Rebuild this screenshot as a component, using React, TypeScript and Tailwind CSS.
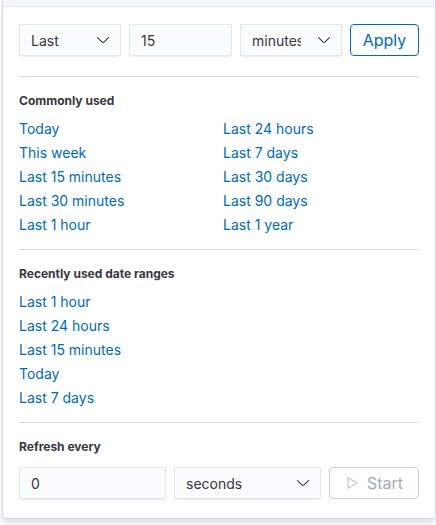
import React from "react";

const Chevron = () => (
  <svg width="16" height="16" viewBox="0 0 16 16" className="absolute right-[10px] top-1/2 -translate-y-1/2" fill="#343741">
    <path d="M13.069 5.157L8.384 9.768a.546.546 0 01-.768 0L2.93 5.158a.552.552 0 00-.771 0 .53.53 0 000 .759l4.684 4.61c.641.631 1.672.63 2.312 0l4.684-4.61a.53.53 0 000-.76.552.552 0 00-.771 0z" />
  </svg>
);

const field =
  "relative h-8 bg-[#fbfcfd] shadow-[inset_0_0_0_1px_rgba(15,39,118,0.1),0_1px_1px_-1px_rgba(152,162,179,0.2),0_3px_2px_-2px_rgba(152,162,179,0.2)] text-[14px] text-[#343741] flex items-center pl-3 overflow-hidden whitespace-nowrap";

const Select = ({ label, className = "" }: { label: string; className?: string }) => (
  <div className={`${field} pr-[41px] ${className}`}>
    <span className="overflow-hidden block min-w-0">{label}</span>
    <Chevron />
  </div>
);

const Link = ({ children }: { children: React.ReactNode }) => (
  <div className="h-6 flex items-center text-[14px] text-[#006bb4] leading-none">{children}</div>
);

export default function App() {
  return (
    <div className="w-[436px] h-[525px] bg-white relative overflow-hidden" style={{ fontFamily: "Inter, 'Noto Sans', sans-serif" }}>
      <div className="absolute left-[2px] top-0 w-[434px] h-[519px] bg-white border-x border-b border-[#d3dae6] rounded-b-[4px] shadow-[0_6px_12px_-1px_rgba(152,162,179,0.2),0_4px_4px_-1px_rgba(152,162,179,0.2)] flex flex-col">
        <div className="h-[7px] bg-[#f5f7fa] border-b border-[#e4e8ef] shrink-0" />
        <div className="px-4 pt-[17px]">
          <div className="flex gap-2 items-center">
            <Select label="Last" className="w-[102px]" />
            <div className={`${field} w-[103px]`}>15</div>
            <Select label="minutes" className="w-[102px]" />
            <div className="w-[69px] h-8 border border-[#006bb4] rounded-[4px] flex items-center justify-center text-[16px] text-[#006bb4]">Apply</div>
          </div>
          <div className="h-px bg-[#d3dae6] mt-5" />
          <div className="pt-4 pb-3">
            <div className="h-4 flex items-center text-[12px] font-bold text-[#343741]">Commonly used</div>
            <div className="grid grid-cols-2 mt-2">
              <div>
                <Link>Today</Link>
                <Link>This week</Link>
                <Link>Last 15 minutes</Link>
                <Link>Last 30 minutes</Link>
                <Link>Last 1 hour</Link>
              </div>
              <div className="pl-1">
                <Link>Last 24 hours</Link>
                <Link>Last 7 days</Link>
                <Link>Last 30 days</Link>
                <Link>Last 90 days</Link>
                <Link>Last 1 year</Link>
              </div>
            </div>
          </div>
          <div className="h-px bg-[#d3dae6]" />
          <div className="pt-4 pb-3">
            <div className="h-4 flex items-center text-[12px] font-bold text-[#343741]">Recently used date ranges</div>
            <div className="mt-2">
              <Link>Last 1 hour</Link>
              <Link>Last 24 hours</Link>
              <Link>Last 15 minutes</Link>
              <Link>Today</Link>
              <Link>Last 7 days</Link>
            </div>
          </div>
          <div className="h-px bg-[#d3dae6]" />
          <div className="pt-4">
            <div className="h-4 flex items-center text-[12px] font-bold text-[#343741]">Refresh every</div>
            <div className="flex gap-2 mt-3 items-center">
              <div className={`${field} w-[147px]`}>0</div>
              <Select label="seconds" className="w-[147px]" />
              <div className="w-[90px] h-8 border border-[#c9ced6] rounded-[4px] flex items-center justify-center gap-2 text-[16px] text-[#a2abba]">
                <svg width="14" height="14" viewBox="0 0 16 16" fill="none" stroke="#a2abba" strokeWidth="1">
                  <path d="M3.5 1.8 L13.5 8 L3.5 14.2 Z" strokeLinejoin="round" />
                </svg>
                Start
              </div>
            </div>
          </div>
        </div>
      </div>
    </div>
  );
}
